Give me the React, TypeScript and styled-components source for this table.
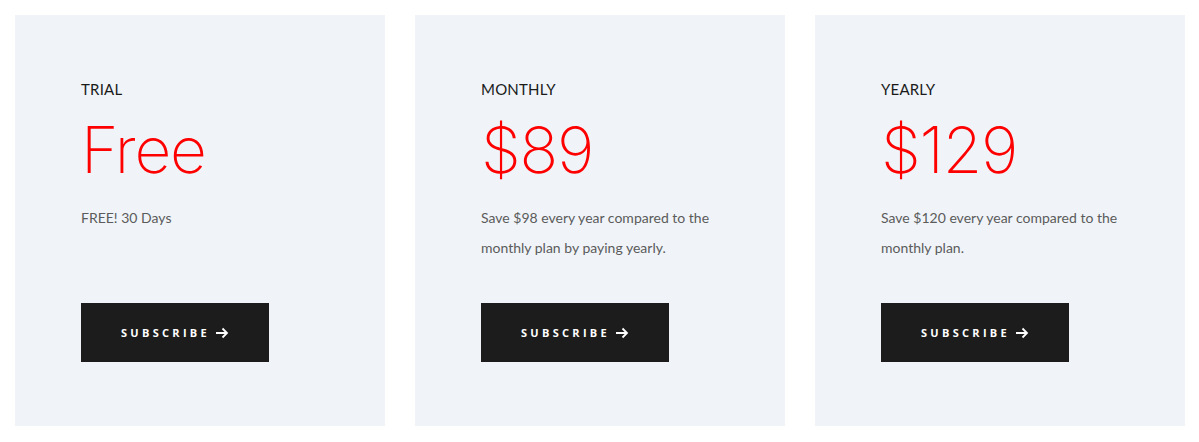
import React from 'react';
import styled, { createGlobalStyle } from 'styled-components';

const GlobalStyle = createGlobalStyle`
  body {
    margin: 0;
    background: #ffffff;
    font-family: Lato, "Open Sans", sans-serif;
  }
`;

const Grid = styled.div`
  display: grid;
  grid-template-columns: repeat(3, 370px);
  gap: 30px;
  padding: 15px;
`;

const Card = styled.div`
  display: flex;
  flex-direction: column;
  align-items: flex-start;
  box-sizing: border-box;
  min-height: 411px;
  padding: 64px 66px 64px 66px;
  background: #f0f4f8;
`;

const Label = styled.div`
  font-size: 15px;
  line-height: 20px;
  color: #1a1a1a;
  letter-spacing: 0.2px;
`;

const Price = styled.div`
  margin-top: 14px;
  font-family: Inter, sans-serif;
  font-weight: 200;
  font-size: 64px;
  line-height: 74px;
  color: #ff0000;
  letter-spacing: -1.2px;
`;

const Description = styled.p`
  margin: 16px 0 0;
  font-size: 14px;
  line-height: 30px;
  color: #5b5b5b;
`;

const Button = styled.button`
  margin-top: auto;
  display: flex;
  align-items: center;
  justify-content: center;
  gap: 5px;
  width: 188px;
  height: 59px;
  border: none;
  background: #1c1c1c;
  color: #ffffff;
  font-family: "Open Sans", sans-serif;
  font-weight: 700;
  font-size: 11px;
  letter-spacing: 3.3px;
  cursor: pointer;
  padding: 0;
`;

const Arrow = () => (
  <svg width="14" height="12" viewBox="0 0 14 12" fill="none" stroke="#fff" strokeWidth="1.8">
    <path d="M1 6h11M7.5 1.5L12 6l-4.5 4.5" />
  </svg>
);

const plans = [
  { name: 'TRIAL', price: 'Free', text: 'FREE! 30 Days' },
  { name: 'MONTHLY', price: '$89', text: 'Save $98 every year compared to the monthly plan by paying yearly.' },
  { name: 'YEARLY', price: '$129', text: 'Save $120 every year compared to the monthly plan.' },
];

export default function App() {
  return (
    <>
      <GlobalStyle />
      <Grid>
        {plans.map(p => (
          <Card key={p.name}>
            <Label>{p.name}</Label>
            <Price>{p.price}</Price>
            <Description>{p.text}</Description>
            <Button>
              SUBSCRIBE <Arrow />
            </Button>
          </Card>
        ))}
      </Grid>
    </>
  );
}
